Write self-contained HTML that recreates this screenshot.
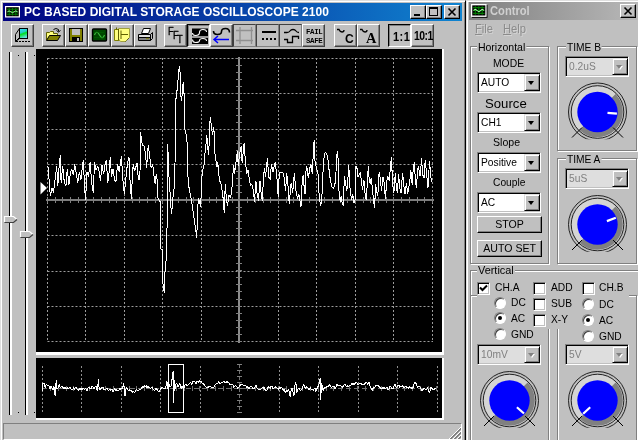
<!DOCTYPE html>
<html><head><meta charset="utf-8"><title>PC BASED DIGITAL STORAGE OSCILLOSCOPE 2100</title>
<style>
*{box-sizing:border-box;margin:0;padding:0}
html,body{width:638px;height:440px;overflow:hidden;background:#c0c0c0}
body{position:relative;font-family:"Liberation Sans",sans-serif;font-size:11.500px;color:#000}
.abs{position:absolute}
.t{position:absolute;white-space:nowrap;line-height:1;transform:scaleX(.93);transform-origin:0 0}
#mainwin{position:absolute;left:0;top:0;width:466px;height:442px;background:#c0c0c0;border-left:1px solid #dfdfdf;border-top:1px solid #dfdfdf;border-right:1px solid #000;box-shadow:inset 1px 1px 0 #fff,inset -1px 0 0 #808080}
#title1{position:absolute;left:3px;top:3px;width:459px;height:18px;background:linear-gradient(to right,#000080 0%,#1084d0 100%)}
#title1 .txt{transform:scaleX(.9995);transform-origin:0 0;position:absolute;left:21px;top:2px;font-weight:bold;font-size:12px;color:#fff;white-space:nowrap;letter-spacing:0.04px;line-height:14px}
.tbtn{position:absolute;top:2px;width:16px;height:14px;background:#c0c0c0;border:1px solid;border-color:#fff #000 #000 #fff;box-shadow:inset -1px -1px 0 #808080}
.btn{position:absolute;top:24px;width:23px;height:23px;background:#c0c0c0;border:1px solid;border-color:#fff #404040 #404040 #fff;box-shadow:inset -1px -1px 0 #808080}
.btn.down{border-color:#000 #fff #fff #000;box-shadow:inset 1px 1px 0 #808080}
.btn.flat{border-color:#404040 #808080 #808080 #404040;box-shadow:none}
.btn svg{position:absolute;left:-1px;top:-1px}
.sunk{border:1px solid;border-color:#808080 #fff #fff #808080}
#ctl{position:absolute;left:466px;top:0;width:180px;height:442px;background:#c0c0c0;border-left:1px solid #dfdfdf;border-top:1px solid #dfdfdf;box-shadow:inset 1px 1px 0 #fff}
#title2{position:absolute;left:469px;top:2px;width:170px;height:18px;background:linear-gradient(to right,#808080,#b8b8b8)}
.grp{position:absolute;border:1px solid #808080;box-shadow:1px 1px 0 #fff,inset 1px 1px 0 #fff}
.t.c{line-height:11px;transform:scaleX(.89)}
.lab{position:absolute;background:#c0c0c0;white-space:nowrap;line-height:11px;padding:0 1px;transform:scaleX(.89);transform-origin:0 0}
.combo{position:absolute;width:64px;height:21px;background:#fff;border:1px solid;border-color:#808080 #fff #fff #808080;box-shadow:inset 1px 1px 0 #000,inset -1px -1px 0 #c0c0c0}
.combo .tx{position:absolute;left:3px;top:4px;line-height:11px;white-space:nowrap;transform:scaleX(.89);transform-origin:0 0}
.combo.dis{background:#dedede}
.combo.dis .tx{color:#808080}
.combo .ar{position:absolute;right:0px;top:1px;width:16px;height:17px;background:#c0c0c0;border:1px solid;border-color:#dfdfdf #000 #000 #dfdfdf;box-shadow:inset 1px 1px 0 #fff,inset -1px -1px 0 #808080}
.combo .ar:after{content:"";position:absolute;left:3px;top:6px;border:3.5px solid transparent;border-top:4px solid #000;border-bottom:0}
.combo.dis .ar:after{border-top-color:#808080;filter:drop-shadow(1px 1px 0 #fff)}
.pbtn{position:absolute;width:65px;height:17px;background:#c0c0c0;border:1px solid;border-color:#fff #000 #000 #fff;box-shadow:inset -1px -1px 0 #808080;text-align:center;line-height:14px}
.pbtn span{display:inline-block;transform:scaleX(.92)}
.chk{position:absolute;width:13px;height:13px;background:#fff;border:1px solid;border-color:#808080 #fff #fff #808080;box-shadow:inset 1px 1px 0 #000,inset -1px -1px 0 #c0c0c0}
.rad{position:absolute;width:12px;height:12px;border-radius:50%;background:#fff;border:1px solid;border-color:#808080 #fff #fff #808080;box-shadow:inset 1px 1px 0 #404040}
.rad.on:after{content:"";position:absolute;left:3px;top:3px;width:4px;height:4px;border-radius:50%;background:#000}
.dot{stroke:#9c9c9c;stroke-width:1;stroke-dasharray:2 2}
.dot2{stroke:#909090;stroke-width:1;stroke-dasharray:2 2}
</style></head><body>

<div id="mainwin"></div>
<div id="title1">
 <svg class="abs" style="left:2px;top:3px" width="16" height="13" viewBox="0 0 16 13"><rect x="0.6" y="0.6" width="13.800" height="10.300" fill="#000" stroke="#fff" stroke-width="1.200"/><path d="M2 3.300H13M2 5.800H13M2 8.300H13M4.200 2V9.500M7.500 2V9.500M10.800 2V9.500" stroke="#007800" stroke-width="1.100" fill="none"/><path d="M2.500 5.800Q4 4 5.800 5.800T9.200 5.800T12.500 5.800" stroke="#b0ffb0" stroke-width="0.900" fill="none"/></svg>
 <div class="txt">PC BASED DIGITAL STORAGE OSCILLOSCOPE 2100</div>
 <div class="tbtn" style="left:407px"><div class="abs" style="left:3px;top:8px;width:6px;height:2px;background:#000"></div></div>
 <div class="tbtn" style="left:423px"><div class="abs" style="left:2px;top:1px;width:9px;height:9px;border:1px solid #000;border-top-width:2px"></div></div>
 <div class="tbtn" style="left:441px"><svg class="abs" style="left:2px;top:1px" width="10" height="10"><path d="M1.5 1.5L8.5 8.5M8.5 1.5L1.5 8.5" stroke="#000" stroke-width="1.6"/></svg></div>
</div>

<!-- toolbar -->
<div class="btn" style="left:11px"><svg width="23" height="23" viewBox="0 0 23 23"><path d="M4.5 10.5L8.5 4.5V13.5L4.5 17.5Z" fill="#c0c0c0" stroke="#000"/><defs><linearGradient id="g1" x1="0" y1="0" x2="0.3" y2="1"><stop offset="0" stop-color="#40e0ff"/><stop offset="0.45" stop-color="#20d0c0"/><stop offset="0.6" stop-color="#00e020"/><stop offset="1" stop-color="#60e0e0"/></linearGradient></defs><rect x="8.5" y="4.5" width="8" height="10" fill="url(#g1)" stroke="#000"/><path d="M4.5 17.5L8.5 14.5" stroke="#000"/><path d="M5 17.5H19" stroke="#000" stroke-dasharray="2 1"/></svg></div>
<div class="btn" style="left:42px"><svg width="23" height="23" viewBox="0 0 23 23"><path d="M4.5 16V8.5H7.5L8.5 7.5H11.5V9.5H15.5V11" fill="#ffff80" stroke="#606000" stroke-width="1"/><path d="M4.5 16.5L7.5 11.5H18.5L15.5 16.5Z" fill="#808000" stroke="#000" stroke-width="1"/><path d="M11.5 5.5Q14 3.5 16.5 5.5V7.5M14.5 6.5L16.5 8L18.5 6.5" fill="none" stroke="#000" stroke-width="1"/></svg></div>
<div class="btn" style="left:65px"><svg width="23" height="23" viewBox="0 0 23 23"><rect x="4.5" y="4.5" width="13" height="13" fill="#808000" stroke="#000"/><rect x="7" y="5" width="8" height="6" fill="#c0c0c0"/><rect x="7" y="13" width="8" height="4" fill="#000"/><rect x="12" y="14" width="2" height="3" fill="#c0c0c0"/></svg></div>
<div class="btn" style="left:88px"><svg width="23" height="23" viewBox="0 0 23 23"><rect x="4.5" y="5" width="14" height="12" rx="1" fill="#004800" stroke="#000" stroke-width="1.4"/><path d="M6.5 11Q8.5 5.5 11.5 11T16.5 11" fill="none" stroke="#40c040" stroke-width="1.1"/><path d="M6.5 8.5H16.500M6.500 13.500H16.500" stroke="#006800" stroke-width="1" stroke-dasharray="1 1"/></svg></div>
<div class="btn" style="left:111px"><svg width="23" height="23" viewBox="0 0 23 23"><g transform="translate(0,-1)"><path d="M3.5 6.5H10.5V17.5H3.5Z" fill="#ffff80" stroke="#808000"/><path d="M7.5 5.5H18.5V14.5L14.5 18.5H9.5L7.5 16Z" fill="#ffff80" stroke="#a0a040" stroke-width="1"/><path d="M5.500 4.500V6.500M7.5 6V17M10 7.500V16M10 11.500H17" stroke="#606000" stroke-width="1" fill="none"/><path d="M14.500 18.500L18.500 14.500" stroke="#404000" stroke-dasharray="1 1"/></g></svg></div>
<div class="btn" style="left:134px"><svg width="23" height="23" viewBox="0 0 23 23"><path d="M7.5 9.500L9.500 4.500H16.500L14.500 9.500Z" fill="#fff" stroke="#000"/><path d="M4.500 10.500H16.500L18.500 8.500V14.500L16.500 16.500H4.500Z" fill="#c0c0c0" stroke="#000"/><path d="M4.500 13.500H16.500M16.500 10.500V16.500" stroke="#000"/><path d="M5 12H16" stroke="#fff"/><path d="M12 14.500H15" stroke="#c0c000" stroke-width="1.2"/><path d="M5 15H16" stroke="#404040"/></svg></div>

<div class="btn" style="left:164px"><div class="t" style="left:2.800px;top:1.700px;font-size:10px;-webkit-text-stroke:0.3px #000">F</div><div class="t" style="left:7.500px;top:6px;font-size:10px;-webkit-text-stroke:0.3px #000">F</div><div class="t" style="left:12.200px;top:10px;font-size:10px;-webkit-text-stroke:0.3px #000">T</div></div>
<div class="btn down" style="left:187px"><svg width="23" height="23" viewBox="0 0 23 23"><rect x="5" y="4.500" width="16" height="15.500" fill="#000"/><path d="M5 13H21" stroke="#fff" stroke-width="1.2"/><path d="M5.500 9Q5.500 11.500 8.500 11.500Q12.500 11.500 12.500 8.500Q12.500 5.500 16 5.500Q19.500 5.500 19.500 8" fill="none" stroke="#fff" stroke-width="1.1"/><path d="M5.500 15.500Q5.500 18.500 8.500 18.500Q12.500 18.500 12.500 16.500Q12.500 14.500 16 14.500Q19.500 14.500 19.500 17" fill="none" stroke="#fff" stroke-width="1.1"/></svg></div>
<div class="btn" style="left:210px"><svg width="23" height="23" viewBox="0 0 23 23"><path d="M3.500 7Q3.500 10.500 7.500 10.500Q11.500 10.500 11.500 7.500Q11.500 4.500 15.500 4.500Q19.500 4.500 19.500 8.500" fill="none" stroke="#000" stroke-width="1.6"/><path d="M4 15.500H19M8 12L4 15.500L8 19" fill="none" stroke="#0000ff" stroke-width="1.5"/></svg></div>
<div class="btn flat" style="left:233px"><svg width="23" height="23" viewBox="0 0 23 23"><path d="M3 6.500H20M3 16.500H20M7 3V20M18.500 3V20" stroke="#909090" stroke-width="1.3" fill="none"/></svg></div>
<div class="btn flat" style="left:256px"><svg width="23" height="23" viewBox="0 0 23 23"><path d="M6 8H20" stroke="#000" stroke-width="2"/><path d="M6 15H20" stroke="#000" stroke-width="2" stroke-dasharray="2 2"/></svg></div>
<div class="btn flat" style="left:279px"><svg width="23" height="23" viewBox="0 0 23 23"><path d="M5 8.500H8Q10 8.500 11 7T14 5.500T17 7T20 8.500" fill="none" stroke="#000" stroke-width="1.3"/><path d="M5 15.500H8.500V18.500H13.500V12.500H19.500V15" fill="none" stroke="#000" stroke-width="1.3"/></svg></div>
<div class="btn" style="left:302px"><div class="t" style="left:2.500px;top:3px;font-family:'Liberation Mono',monospace;font-weight:bold;font-size:8px;letter-spacing:-0.4px">FAIL</div><div class="t" style="left:2.500px;top:11.500px;font-family:'Liberation Mono',monospace;font-weight:bold;font-size:8px;letter-spacing:-0.4px">SAFE</div></div>

<div class="btn" style="left:334px"><svg width="23" height="23" viewBox="0 0 23 23"><path d="M3 5.500H5Q6 8 8 8T10 6" fill="none" stroke="#000" stroke-width="1.3"/></svg><div class="t" style="left:10px;top:7px;font-weight:bold;font-size:13px">C</div></div>
<div class="btn" style="left:357px"><svg width="23" height="23" viewBox="0 0 23 23"><path d="M3 5.500H5Q6 8 8 8T10 6" fill="none" stroke="#000" stroke-width="1.3"/></svg><div class="t" style="left:8px;top:5px;font-family:'Liberation Serif',serif;font-weight:bold;font-size:15.500px">A</div></div>

<div class="btn down" style="left:388px"><div class="t" style="left:4px;top:4.500px;font-weight:bold;font-size:13px;letter-spacing:0.500px;transform:scaleX(.85)">1:1</div></div>
<div class="btn" style="left:411px"><div class="t" style="left:2px;top:4px;font-weight:bold;font-size:13px;letter-spacing:-0.6px;transform:scaleX(0.8);transform-origin:0 0">10:1</div></div>

<!-- sliders -->
<div class="abs" style="left:9px;top:52px;width:3px;height:363px;background:#fff;border-left:1px solid #000"></div>
<div class="abs" style="left:25px;top:52px;width:3px;height:363px;background:#fff;border-left:1px solid #000"></div>
<div class="abs" style="left:18px;top:55px;width:1px;height:1px;background:#000"></div>
<div class="abs" style="left:34px;top:55px;width:1px;height:1px;background:#000"></div>
<div class="abs" style="left:18px;top:412px;width:1px;height:1px;background:#000"></div>
<div class="abs" style="left:34px;top:412px;width:1px;height:1px;background:#000"></div>
<svg class="abs" style="left:0;top:0" width="40" height="440"><g><path d="M4.500 216.500H13.500L17 219.500L13.500 222.500H4.500Z" fill="#c0c0c0"/><path d="M4.500 222V216.500H13.500L17 219.500" fill="none" stroke="#fff" stroke-width="1.2"/><path d="M4.500 222.500H13.500L17 219.500" fill="none" stroke="#404040" stroke-width="1.2"/></g><g transform="translate(16,15)"><path d="M4.500 216.500H13.500L17 219.500L13.500 222.500H4.500Z" fill="#c0c0c0"/><path d="M4.500 222V216.500H13.500L17 219.500" fill="none" stroke="#fff" stroke-width="1.2"/><path d="M4.500 222.500H13.500L17 219.500" fill="none" stroke="#404040" stroke-width="1.2"/></g></svg>

<!-- scope -->
<div class="abs" style="left:36px;top:49px;width:408px;height:306px;background:#000;border-right:2px solid #fff;border-bottom:3px solid #fff"></div>
<div class="abs" style="left:36px;top:358px;width:408px;height:62px;background:#000;border-right:2px solid #fff;border-bottom:2px solid #fff"></div>
<svg class="abs" style="left:0;top:0" width="466" height="440" viewBox="0 0 466 440">
<line x1="47.5" y1="58" x2="47.5" y2="342" class="dot"/><line x1="85.5" y1="58" x2="85.5" y2="342" class="dot"/><line x1="124.5" y1="58" x2="124.5" y2="342" class="dot"/><line x1="162.5" y1="58" x2="162.5" y2="342" class="dot"/><line x1="201.5" y1="58" x2="201.5" y2="342" class="dot"/><line x1="278.5" y1="58" x2="278.5" y2="342" class="dot"/><line x1="316.5" y1="58" x2="316.5" y2="342" class="dot"/><line x1="355.5" y1="58" x2="355.5" y2="342" class="dot"/><line x1="393.5" y1="58" x2="393.5" y2="342" class="dot"/><line x1="432.5" y1="58" x2="432.5" y2="342" class="dot"/><line x1="47.5" y1="58.5" x2="433" y2="58.5" class="dot"/><line x1="47.5" y1="93.5" x2="433" y2="93.5" class="dot"/><line x1="47.5" y1="129.5" x2="433" y2="129.5" class="dot"/><line x1="47.5" y1="164.5" x2="433" y2="164.5" class="dot"/><line x1="47.5" y1="235.5" x2="433" y2="235.5" class="dot"/><line x1="47.5" y1="271.5" x2="433" y2="271.5" class="dot"/><line x1="47.5" y1="306.5" x2="433" y2="306.5" class="dot"/><line x1="47.5" y1="341.5" x2="433" y2="341.5" class="dot"/>
<line x1="46" y1="200" x2="434" y2="200" stroke="#7c7c7c" stroke-width="2"/><line x1="239" y1="57" x2="239" y2="343" stroke="#8c8c8c" stroke-width="2"/><line x1="47.5" y1="197" x2="47.5" y2="203" stroke="#808080" stroke-width="1"/><line x1="55.5" y1="197" x2="55.5" y2="203" stroke="#808080" stroke-width="1"/><line x1="62.5" y1="197" x2="62.5" y2="203" stroke="#808080" stroke-width="1"/><line x1="70.5" y1="197" x2="70.5" y2="203" stroke="#808080" stroke-width="1"/><line x1="78.5" y1="197" x2="78.5" y2="203" stroke="#808080" stroke-width="1"/><line x1="86.5" y1="197" x2="86.5" y2="203" stroke="#808080" stroke-width="1"/><line x1="93.5" y1="197" x2="93.5" y2="203" stroke="#808080" stroke-width="1"/><line x1="101.5" y1="197" x2="101.5" y2="203" stroke="#808080" stroke-width="1"/><line x1="109.5" y1="197" x2="109.5" y2="203" stroke="#808080" stroke-width="1"/><line x1="116.5" y1="197" x2="116.5" y2="203" stroke="#808080" stroke-width="1"/><line x1="124.5" y1="197" x2="124.5" y2="203" stroke="#808080" stroke-width="1"/><line x1="132.5" y1="197" x2="132.5" y2="203" stroke="#808080" stroke-width="1"/><line x1="139.5" y1="197" x2="139.5" y2="203" stroke="#808080" stroke-width="1"/><line x1="147.5" y1="197" x2="147.5" y2="203" stroke="#808080" stroke-width="1"/><line x1="155.5" y1="197" x2="155.5" y2="203" stroke="#808080" stroke-width="1"/><line x1="162.5" y1="197" x2="162.5" y2="203" stroke="#808080" stroke-width="1"/><line x1="170.5" y1="197" x2="170.5" y2="203" stroke="#808080" stroke-width="1"/><line x1="178.5" y1="197" x2="178.5" y2="203" stroke="#808080" stroke-width="1"/><line x1="186.5" y1="197" x2="186.5" y2="203" stroke="#808080" stroke-width="1"/><line x1="193.5" y1="197" x2="193.5" y2="203" stroke="#808080" stroke-width="1"/><line x1="201.5" y1="197" x2="201.5" y2="203" stroke="#808080" stroke-width="1"/><line x1="209.5" y1="197" x2="209.5" y2="203" stroke="#808080" stroke-width="1"/><line x1="216.5" y1="197" x2="216.5" y2="203" stroke="#808080" stroke-width="1"/><line x1="224.5" y1="197" x2="224.5" y2="203" stroke="#808080" stroke-width="1"/><line x1="232.5" y1="197" x2="232.5" y2="203" stroke="#808080" stroke-width="1"/><line x1="239.5" y1="197" x2="239.5" y2="203" stroke="#808080" stroke-width="1"/><line x1="247.5" y1="197" x2="247.5" y2="203" stroke="#808080" stroke-width="1"/><line x1="255.5" y1="197" x2="255.5" y2="203" stroke="#808080" stroke-width="1"/><line x1="263.5" y1="197" x2="263.5" y2="203" stroke="#808080" stroke-width="1"/><line x1="270.5" y1="197" x2="270.5" y2="203" stroke="#808080" stroke-width="1"/><line x1="278.5" y1="197" x2="278.5" y2="203" stroke="#808080" stroke-width="1"/><line x1="286.5" y1="197" x2="286.5" y2="203" stroke="#808080" stroke-width="1"/><line x1="293.5" y1="197" x2="293.5" y2="203" stroke="#808080" stroke-width="1"/><line x1="301.5" y1="197" x2="301.5" y2="203" stroke="#808080" stroke-width="1"/><line x1="309.5" y1="197" x2="309.5" y2="203" stroke="#808080" stroke-width="1"/><line x1="316.5" y1="197" x2="316.5" y2="203" stroke="#808080" stroke-width="1"/><line x1="324.5" y1="197" x2="324.5" y2="203" stroke="#808080" stroke-width="1"/><line x1="332.5" y1="197" x2="332.5" y2="203" stroke="#808080" stroke-width="1"/><line x1="340.5" y1="197" x2="340.5" y2="203" stroke="#808080" stroke-width="1"/><line x1="347.5" y1="197" x2="347.5" y2="203" stroke="#808080" stroke-width="1"/><line x1="355.5" y1="197" x2="355.5" y2="203" stroke="#808080" stroke-width="1"/><line x1="363.5" y1="197" x2="363.5" y2="203" stroke="#808080" stroke-width="1"/><line x1="370.5" y1="197" x2="370.5" y2="203" stroke="#808080" stroke-width="1"/><line x1="378.5" y1="197" x2="378.5" y2="203" stroke="#808080" stroke-width="1"/><line x1="386.5" y1="197" x2="386.5" y2="203" stroke="#808080" stroke-width="1"/><line x1="393.5" y1="197" x2="393.5" y2="203" stroke="#808080" stroke-width="1"/><line x1="401.5" y1="197" x2="401.5" y2="203" stroke="#808080" stroke-width="1"/><line x1="409.5" y1="197" x2="409.5" y2="203" stroke="#808080" stroke-width="1"/><line x1="417.5" y1="197" x2="417.5" y2="203" stroke="#808080" stroke-width="1"/><line x1="424.5" y1="197" x2="424.5" y2="203" stroke="#808080" stroke-width="1"/><line x1="432.5" y1="197" x2="432.5" y2="203" stroke="#808080" stroke-width="1"/><line x1="236" y1="58.5" x2="242" y2="58.5" stroke="#808080" stroke-width="1"/><line x1="236" y1="65.5" x2="242" y2="65.5" stroke="#808080" stroke-width="1"/><line x1="236" y1="72.5" x2="242" y2="72.5" stroke="#808080" stroke-width="1"/><line x1="236" y1="79.5" x2="242" y2="79.5" stroke="#808080" stroke-width="1"/><line x1="236" y1="86.5" x2="242" y2="86.5" stroke="#808080" stroke-width="1"/><line x1="236" y1="93.5" x2="242" y2="93.5" stroke="#808080" stroke-width="1"/><line x1="236" y1="100.5" x2="242" y2="100.5" stroke="#808080" stroke-width="1"/><line x1="236" y1="108.5" x2="242" y2="108.5" stroke="#808080" stroke-width="1"/><line x1="236" y1="115.5" x2="242" y2="115.5" stroke="#808080" stroke-width="1"/><line x1="236" y1="122.5" x2="242" y2="122.5" stroke="#808080" stroke-width="1"/><line x1="236" y1="129.5" x2="242" y2="129.5" stroke="#808080" stroke-width="1"/><line x1="236" y1="136.5" x2="242" y2="136.5" stroke="#808080" stroke-width="1"/><line x1="236" y1="143.5" x2="242" y2="143.5" stroke="#808080" stroke-width="1"/><line x1="236" y1="150.5" x2="242" y2="150.5" stroke="#808080" stroke-width="1"/><line x1="236" y1="157.5" x2="242" y2="157.5" stroke="#808080" stroke-width="1"/><line x1="236" y1="164.5" x2="242" y2="164.5" stroke="#808080" stroke-width="1"/><line x1="236" y1="171.5" x2="242" y2="171.5" stroke="#808080" stroke-width="1"/><line x1="236" y1="178.5" x2="242" y2="178.5" stroke="#808080" stroke-width="1"/><line x1="236" y1="185.5" x2="242" y2="185.5" stroke="#808080" stroke-width="1"/><line x1="236" y1="192.5" x2="242" y2="192.5" stroke="#808080" stroke-width="1"/><line x1="236" y1="199.5" x2="242" y2="199.5" stroke="#808080" stroke-width="1"/><line x1="236" y1="207.5" x2="242" y2="207.5" stroke="#808080" stroke-width="1"/><line x1="236" y1="214.5" x2="242" y2="214.5" stroke="#808080" stroke-width="1"/><line x1="236" y1="221.5" x2="242" y2="221.5" stroke="#808080" stroke-width="1"/><line x1="236" y1="228.5" x2="242" y2="228.5" stroke="#808080" stroke-width="1"/><line x1="236" y1="235.5" x2="242" y2="235.5" stroke="#808080" stroke-width="1"/><line x1="236" y1="242.5" x2="242" y2="242.5" stroke="#808080" stroke-width="1"/><line x1="236" y1="249.5" x2="242" y2="249.5" stroke="#808080" stroke-width="1"/><line x1="236" y1="256.5" x2="242" y2="256.5" stroke="#808080" stroke-width="1"/><line x1="236" y1="263.5" x2="242" y2="263.5" stroke="#808080" stroke-width="1"/><line x1="236" y1="270.5" x2="242" y2="270.5" stroke="#808080" stroke-width="1"/><line x1="236" y1="277.5" x2="242" y2="277.5" stroke="#808080" stroke-width="1"/><line x1="236" y1="284.5" x2="242" y2="284.5" stroke="#808080" stroke-width="1"/><line x1="236" y1="291.5" x2="242" y2="291.5" stroke="#808080" stroke-width="1"/><line x1="236" y1="299.5" x2="242" y2="299.5" stroke="#808080" stroke-width="1"/><line x1="236" y1="306.5" x2="242" y2="306.5" stroke="#808080" stroke-width="1"/><line x1="236" y1="313.5" x2="242" y2="313.5" stroke="#808080" stroke-width="1"/><line x1="236" y1="320.5" x2="242" y2="320.5" stroke="#808080" stroke-width="1"/><line x1="236" y1="327.5" x2="242" y2="327.5" stroke="#808080" stroke-width="1"/><line x1="236" y1="334.5" x2="242" y2="334.5" stroke="#808080" stroke-width="1"/><line x1="236" y1="341.5" x2="242" y2="341.5" stroke="#808080" stroke-width="1"/>
<path d="M40.500 182L47 188L40.500 194.500Z" fill="#fff"/>
<polyline points="47.9,166.2 48.7,174.2 50.3,196.4 51.9,187.7 53.5,192.5 55.1,179.7 56.7,166.2 57.8,186.1 59.1,167.0 60.3,155.1 61.1,182.9 62.7,166.2 64.2,181.3 65.9,186.1 67.3,168.6 68.9,185.3 70.5,171.8 71.8,169.4 73.4,175.0 74.7,163.8 76.2,173.4 77.8,182.9 79.4,171.8 81.0,179.7 82.6,163.8 83.4,159.9 84.5,186.1 85.6,200.4 86.9,171.8 88.5,176.6 90.1,162.3 91.7,182.9 93.3,192.5 94.5,162.3 96.0,170.2 97.6,166.2 99.1,171.0 100.4,181.3 102.0,165.4 103.6,174.2 105.2,163.8 106.5,159.9 107.6,182.9 108.7,176.6 110.3,156.7 111.5,176.6 113.1,168.6 114.4,179.7 116.0,181.3 117.6,163.8 119.2,171.8 120.3,163.8 121.4,155.9 122.7,178.2 124.3,194.1 125.9,178.2 127.4,163.8 129.0,157.5 130.3,186.1 131.4,198.8 132.4,175.6 133.2,164.5 134.5,170.9 135.6,167.7 137.2,162.9 137.9,174.1 139.2,180.4 140.0,170.9 140.7,131.9 141.4,140.7 142.7,145.4 144.3,146.2 145.6,155.0 146.7,167.7 147.5,153.4 148.3,145.4 149.4,153.4 150.7,166.1 151.9,167.7 152.7,164.5 153.8,174.1 155.1,183.6 156.2,174.1 157.0,178.8 157.8,186.8 157.8,197.7 160.2,201.7 160.7,248.7 162.3,249.5 162.3,283 163.4,284.5 164.2,293.3 164.2,272.6 165,271.8 165,261.5 166.6,260.7 166.9,236 167.4,200 167.4,143.8 168.2,154.2 168.6,172.5 169.7,183.6 170.5,204.1 171.7,213.6 172.6,200.9 174.5,185.0 175.0,165 175.3,130.3 175.6,101.1 176.6,94.7 177.7,83.6 178.5,74.1 179.3,66.1 180.2,74.1 180.9,96.3 181.7,101.1 182.5,88.4 183.3,82 183.7,93.2 184.5,93.2 184.5,120.0 184.8,129.5 186.9,136.7 187.6,172.5 189.1,188.4 190.4,194.5 192.0,204.1 196.8,237.5 197.6,210.4 198.4,197.7 200.7,206.5 201.5,185.0 202.3,170.9 203.9,166.1 204.7,156.6 206.0,143.8 206.8,135.1 207.9,148.6 208.7,155.0 209.5,131.1 209.4,130.7 210.3,117.2 211.5,127.5 212.6,134.6 213.8,126.7 215.0,153.7 216.2,162.5 217.0,167.2 217.8,162.5 219.4,180.0 221.0,183.8 222.6,193.4 223.4,201.3 224.2,212.5 225.3,183.8 226.2,196.6 227.4,206.1 229.0,195.0 230.5,198.2 231.7,191.8 232.9,174.3 233.7,164.8 234.5,173.6 236.1,160.9 237.4,151.3 238.2,165.6 239.3,156.1 241.2,145.8 242.1,162.5 244.1,143.4 245.6,164.1 246.9,173.6 248.0,170.4 249.6,180.0 250.4,186.2 251.7,183.8 252.8,188.6 253.6,191.0 254.4,202.1 256.0,181.5 256.8,191.8 258.4,200.5 260.0,180.7 260.7,190.2 262.3,200.5 263.4,179.1 264.4,167.9 265.5,176.8 267.4,158.5 268.7,176.8 270.3,179.9 271.4,164.0 273.0,172.0 275.1,162.5 276.6,173.6 277.4,183.8 278.2,197.4 279.3,172.7 282.9,172.6 284.0,176.6 285.6,190.9 286.7,172.6 287.9,184.5 289.2,203.6 290.3,192.5 291.1,182.9 292.7,192.5 294.3,173.4 295.9,190.9 297.5,198.8 298.8,194.1 299.9,200.4 301.0,206.8 301.9,186.1 303.1,175.0 304.2,187.7 305.1,194.1 306.2,166.2 307.3,168.6 308.3,178.2 309.9,167.8 311.0,164.6 312.3,174.2 313.4,151.1 314.2,140.0 315.0,160.7 316.6,168.6 318.2,174.2 319.0,192.5 320.5,206.0 321.7,202.0 322.9,173.4 324.2,155.9 325.3,151.9 327.7,155.9 328.5,165.4 330.1,178.2 331.7,186.9 333.3,188.5 334.8,186.1 336.0,171.8 337.2,151.1 338.5,162.3 339.1,195.6 340.4,202.0 341.2,195.6 342.3,203.6 343.3,206.0 344.4,175.8 345.5,182.9 346.8,190.9 347.6,184.5 348.7,164.6 350.0,187.7 351.5,200.4 352.8,194.1 353.9,202.8 355.0,200.4 356.0,166.2 357.1,168.6 357.9,177.4 359.5,173.4 360.3,172.6 361.3,179.7 362.4,190.1 364.0,180.5 365.1,194.1 366.4,200.4 367.5,178.2 368.3,166.2 369.2,179.7 370.3,183.7 371.1,178.2 372.4,187.7 373.5,200.4 374.6,208.4 375.6,184.5 376.7,190.9 377.8,196.4 379.1,172.6 380.3,178.2 381.5,190.9 383.1,176.6 384.2,182.9 385.4,198.8 386.7,181.3 387.8,176.6 389.4,180.5 390.5,165.4 391.5,156.7 392.3,178.2 393.1,188.5 393.9,192.5 395.3,172.6 396.2,186.1 397.4,193.3 398.6,174.2 399.7,187.7 401.0,193.3 402.6,172.6 403.7,184.5 405.0,194.1 406.4,182.9 407.7,194.1 409.0,186.1 410.1,178.2 410.9,170.2 412.1,184.5 413.3,168.6 414.4,162.3 415.3,179.7 416.4,187.7 417.6,170.2 418.5,166.2 419.6,175.0 420.4,175.8 421.5,158.3 422.8,175.0 424.1,178.2 425.2,159.9 426.5,173.4 428.0,187.7 429.5,160.7 430.7,176.6 431.9,182.1" fill="none" stroke="#fff" stroke-width="1" stroke-linejoin="bevel" shape-rendering="crispEdges"/>
<line x1="42.5" y1="366" x2="42.5" y2="413" class="dot2"/><line x1="81.5" y1="366" x2="81.5" y2="413" class="dot2"/><line x1="121.5" y1="366" x2="121.5" y2="413" class="dot2"/><line x1="160.5" y1="366" x2="160.5" y2="413" class="dot2"/><line x1="200.5" y1="366" x2="200.5" y2="413" class="dot2"/><line x1="279.5" y1="366" x2="279.5" y2="413" class="dot2"/><line x1="318.5" y1="366" x2="318.5" y2="413" class="dot2"/><line x1="358.5" y1="366" x2="358.5" y2="413" class="dot2"/><line x1="397.5" y1="366" x2="397.5" y2="413" class="dot2"/><line x1="437.5" y1="366" x2="437.5" y2="413" class="dot2"/><line x1="239.5" y1="364" x2="239.5" y2="413" stroke="#707070" stroke-width="1" stroke-dasharray="4 2"/><line x1="237" y1="364.5" x2="242" y2="364.5" stroke="#808080" stroke-width="1"/><line x1="237" y1="370.5" x2="242" y2="370.5" stroke="#808080" stroke-width="1"/><line x1="237" y1="376.5" x2="242" y2="376.5" stroke="#808080" stroke-width="1"/><line x1="237" y1="382.5" x2="242" y2="382.5" stroke="#808080" stroke-width="1"/><line x1="237" y1="388.5" x2="242" y2="388.5" stroke="#808080" stroke-width="1"/><line x1="237" y1="394.5" x2="242" y2="394.5" stroke="#808080" stroke-width="1"/><line x1="237" y1="400.5" x2="242" y2="400.5" stroke="#808080" stroke-width="1"/><line x1="237" y1="406.5" x2="242" y2="406.5" stroke="#808080" stroke-width="1"/><line x1="237" y1="412.5" x2="242" y2="412.5" stroke="#808080" stroke-width="1"/><line x1="42" y1="388.5" x2="437" y2="388.5" stroke="#707070" stroke-width="1" stroke-dasharray="5 3"/><line x1="42.5" y1="386" x2="42.5" y2="391" stroke="#707070" stroke-width="1"/><line x1="50.5" y1="386" x2="50.5" y2="391" stroke="#707070" stroke-width="1"/><line x1="58.5" y1="386" x2="58.5" y2="391" stroke="#707070" stroke-width="1"/><line x1="66.5" y1="386" x2="66.5" y2="391" stroke="#707070" stroke-width="1"/><line x1="73.5" y1="386" x2="73.5" y2="391" stroke="#707070" stroke-width="1"/><line x1="81.5" y1="386" x2="81.5" y2="391" stroke="#707070" stroke-width="1"/><line x1="89.5" y1="386" x2="89.5" y2="391" stroke="#707070" stroke-width="1"/><line x1="97.5" y1="386" x2="97.5" y2="391" stroke="#707070" stroke-width="1"/><line x1="105.5" y1="386" x2="105.5" y2="391" stroke="#707070" stroke-width="1"/><line x1="113.5" y1="386" x2="113.5" y2="391" stroke="#707070" stroke-width="1"/><line x1="121.5" y1="386" x2="121.5" y2="391" stroke="#707070" stroke-width="1"/><line x1="129.5" y1="386" x2="129.5" y2="391" stroke="#707070" stroke-width="1"/><line x1="136.5" y1="386" x2="136.5" y2="391" stroke="#707070" stroke-width="1"/><line x1="144.5" y1="386" x2="144.5" y2="391" stroke="#707070" stroke-width="1"/><line x1="152.5" y1="386" x2="152.5" y2="391" stroke="#707070" stroke-width="1"/><line x1="160.5" y1="386" x2="160.5" y2="391" stroke="#707070" stroke-width="1"/><line x1="168.5" y1="386" x2="168.5" y2="391" stroke="#707070" stroke-width="1"/><line x1="176.5" y1="386" x2="176.5" y2="391" stroke="#707070" stroke-width="1"/><line x1="184.5" y1="386" x2="184.5" y2="391" stroke="#707070" stroke-width="1"/><line x1="192.5" y1="386" x2="192.5" y2="391" stroke="#707070" stroke-width="1"/><line x1="199.5" y1="386" x2="199.5" y2="391" stroke="#707070" stroke-width="1"/><line x1="207.5" y1="386" x2="207.5" y2="391" stroke="#707070" stroke-width="1"/><line x1="215.5" y1="386" x2="215.5" y2="391" stroke="#707070" stroke-width="1"/><line x1="223.5" y1="386" x2="223.5" y2="391" stroke="#707070" stroke-width="1"/><line x1="231.5" y1="386" x2="231.5" y2="391" stroke="#707070" stroke-width="1"/><line x1="239.5" y1="386" x2="239.5" y2="391" stroke="#707070" stroke-width="1"/><line x1="247.5" y1="386" x2="247.5" y2="391" stroke="#707070" stroke-width="1"/><line x1="255.5" y1="386" x2="255.5" y2="391" stroke="#707070" stroke-width="1"/><line x1="263.5" y1="386" x2="263.5" y2="391" stroke="#707070" stroke-width="1"/><line x1="270.5" y1="386" x2="270.5" y2="391" stroke="#707070" stroke-width="1"/><line x1="278.5" y1="386" x2="278.5" y2="391" stroke="#707070" stroke-width="1"/><line x1="286.5" y1="386" x2="286.5" y2="391" stroke="#707070" stroke-width="1"/><line x1="294.5" y1="386" x2="294.5" y2="391" stroke="#707070" stroke-width="1"/><line x1="302.5" y1="386" x2="302.5" y2="391" stroke="#707070" stroke-width="1"/><line x1="310.5" y1="386" x2="310.5" y2="391" stroke="#707070" stroke-width="1"/><line x1="318.5" y1="386" x2="318.5" y2="391" stroke="#707070" stroke-width="1"/><line x1="326.5" y1="386" x2="326.5" y2="391" stroke="#707070" stroke-width="1"/><line x1="333.5" y1="386" x2="333.5" y2="391" stroke="#707070" stroke-width="1"/><line x1="341.5" y1="386" x2="341.5" y2="391" stroke="#707070" stroke-width="1"/><line x1="349.5" y1="386" x2="349.5" y2="391" stroke="#707070" stroke-width="1"/><line x1="357.5" y1="386" x2="357.5" y2="391" stroke="#707070" stroke-width="1"/><line x1="365.5" y1="386" x2="365.5" y2="391" stroke="#707070" stroke-width="1"/><line x1="373.5" y1="386" x2="373.5" y2="391" stroke="#707070" stroke-width="1"/><line x1="381.5" y1="386" x2="381.5" y2="391" stroke="#707070" stroke-width="1"/><line x1="389.5" y1="386" x2="389.5" y2="391" stroke="#707070" stroke-width="1"/><line x1="396.5" y1="386" x2="396.5" y2="391" stroke="#707070" stroke-width="1"/><line x1="404.5" y1="386" x2="404.5" y2="391" stroke="#707070" stroke-width="1"/><line x1="412.5" y1="386" x2="412.5" y2="391" stroke="#707070" stroke-width="1"/><line x1="420.5" y1="386" x2="420.5" y2="391" stroke="#707070" stroke-width="1"/><line x1="428.5" y1="386" x2="428.5" y2="391" stroke="#707070" stroke-width="1"/><line x1="436.5" y1="386" x2="436.5" y2="391" stroke="#707070" stroke-width="1"/>
<rect x="168.500" y="364.500" width="15" height="48" fill="none" stroke="#fff" stroke-width="1"/>
<polyline points="42.4,390.8 42.7,382.8 43.5,383.2 44.3,383.6 45.1,387.6 45.9,385.4 46.7,384.4 47.5,385.4 48.3,385.2 49.1,386.0 49.9,389.2 50.7,386.4 51.5,386.0 52.3,389.2 53.1,390.0 53.8,386.0 54.5,389.6 55.1,395.5 55.7,387.9 56.2,380.4 57.0,389.2 57.8,388.4 58.6,385.2 59.4,384.5 60.2,387.5 61.0,386.8 61.8,386.7 62.6,386.7 63.4,388.4 64.2,386.9 65.0,388.5 65.8,387.6 66.6,388.7 67.4,387.5 68.2,389.2 69.0,388.1 69.7,386.9 70.5,387.6 71.3,389.3 72.1,389.3 72.9,389.2 73.7,387.5 74.5,389.3 75.3,387.6 76.1,387.2 76.9,388.6 77.7,390.0 78.5,390.8 79.3,388.0 80.1,390.0 80.9,388.4 81.7,389.8 82.5,389.4 83.3,387.8 84.1,389.2 84.9,388.9 85.6,388.5 86.4,390.0 87.2,390.4 88.0,387.8 88.8,387.6 89.6,387.9 90.4,388.7 91.2,388.4 92.0,386.6 92.8,386.0 93.6,388.8 94.4,389.2 95.2,386.4 96.0,386.0 96.8,389.6 97.6,390.8 98.4,378.8 99.2,389.2 100.0,388.7 100.7,389.3 101.5,387.6 102.3,387.5 103.1,387.5 103.9,389.2 104.7,390.1 105.5,389.9 106.3,388.4 107.1,388.6 107.9,390.0 108.7,390.8 109.5,389.1 110.3,390.9 111.1,389.2 111.9,389.2 112.7,391.6 113.5,392.0 114.3,388.8 115.1,389.2 115.9,390.9 116.6,389.7 117.4,390.8 118.2,390.6 119.0,390.4 119.8,388.4 120.6,389.3 121.4,388.9 122.2,389.2 123.0,386.6 123.8,382.8 124.4,390.8 125.1,396.3 125.7,392.2 126.2,386.8 127.0,388.4 127.8,390.0 128.6,390.3 129.5,389.9 130.3,390.8 131.1,390.7 131.9,391.3 132.7,392.4 133.5,390.9 134.3,393.1 135.1,391.6 135.9,390.4 136.7,389.2 137.5,390.7 138.3,390.3 139.1,390.0 139.9,389.5 140.7,389.5 141.5,388.4 142.3,387.2 143.1,386.0 143.9,387.5 144.6,385.3 145.4,386.8 146.2,385.3 147.0,387.5 147.8,386.0 148.6,387.4 149.4,387.0 150.2,388.4 151.0,388.0 151.8,387.6 152.6,387.8 153.4,389.8 154.2,390.0 155.0,390.3 155.8,388.3 156.6,389.2 157.4,389.2 158.2,391.6 159.0,392.0 159.7,391.2 160.5,389.2 161.3,388.4 162.1,387.6 162.9,387.9 163.7,388.1 164.5,388.4 165.3,388.4 166.1,386.0 166.9,381.2 167.7,388.4 168.5,387.0 169.3,384.4 170.1,386.8 170.9,386.8 171.5,383.4 172.1,378.8 172.7,373.7 173.3,370.9 173.6,402.7 174.4,380.4 175.3,389.2 175.9,384.8 176.4,382.8 177.2,384.8 178.0,386.8 178.8,385.8 179.6,383.6 180.4,385.2 181.2,389.2 181.8,386.4 182.3,386.0 182.9,387.2 183.6,388.4 184.4,387.6 185.2,384.4 186.0,385.3 186.8,384.9 187.6,385.2 188.4,385.0 189.2,383.6 190.0,382.8 190.8,382.4 191.5,384.4 192.3,383.4 193.1,381.2 193.9,381.7 194.7,381.7 195.5,382.8 196.3,383.7 197.1,381.1 197.9,382.0 198.7,382.3 199.5,380.3 200.3,381.2 201.1,381.4 201.9,382.8 202.7,383.6 203.5,383.8 204.3,384.6 205.1,386.0 205.9,387.1 206.6,387.7 207.4,387.6 208.2,387.9 209.0,385.9 209.8,386.8 210.7,386.5 211.5,387.9 212.4,387.6 213.2,387.4 214.0,387.2 214.8,385.2 215.6,384.7 216.4,383.5 217.2,383.6 217.9,383.0 218.7,381.2 219.5,383.6 220.3,383.6 221.1,382.8 221.9,382.0 222.7,382.3 223.5,381.5 224.3,381.2 225.1,382.6 225.9,382.8 226.7,381.8 227.5,382.0 228.3,382.5 229.1,382.9 229.9,385.2 230.7,384.3 231.5,384.1 232.3,384.4 233.1,385.4 233.8,387.6 234.6,386.5 235.4,385.3 236.2,386.0 237.0,387.1 237.8,388.3 238.6,387.6 239.4,385.9 240.2,385.5 241.0,384.4 241.8,384.9 242.6,384.3 243.4,386.0 244.2,385.1 245.0,386.1 245.8,385.2 246.6,387.2 247.4,386.8 248.2,387.6 249.0,388.3 249.7,387.7 250.5,386.0 251.3,386.8 252.1,387.0 252.9,388.4 253.7,388.8 254.5,388.0 255.3,386.0 256.1,385.6 256.9,388.2 257.7,388.4 258.5,389.9 259.3,389.5 260.1,389.2 260.9,389.3 261.7,388.7 262.5,387.6 263.3,388.7 264.0,387.5 264.8,389.2 265.6,390.6 266.4,390.8 267.2,389.8 268.0,387.6 268.8,386.7 269.6,387.5 270.4,388.4 271.0,386.0 271.7,386.0 272.2,386.6 272.8,388.4 273.6,388.7 274.4,387.3 275.2,387.6 276.0,386.7 276.8,388.1 277.6,388.4 278.4,389.9 279.2,387.7 280.0,389.2 280.8,387.7 281.5,387.5 282.3,388.4 283.1,390.4 283.9,389.4 284.7,390.8 285.5,392.3 286.3,390.1 287.1,391.6 287.9,390.4 288.7,389.2 289.5,394.3 290.3,397.1 290.9,391.6 291.4,388.4 292.0,388.4 292.7,390.8 293.3,392.5 293.9,395.5 294.5,390.8 295.1,383.6 295.9,382.8 296.6,392.4 297.4,391.0 298.2,388.4 299.0,388.6 299.8,390.0 300.6,390.8 301.1,390.0 301.6,389.2 302.6,388.0 303.5,384.4 304.2,385.7 304.9,387.7 305.6,388.4 306.4,386.8 307.2,387.6 307.9,387.6 308.7,390.0 309.5,389.4 310.3,387.6 311.1,389.0 311.9,389.8 312.7,390.0 313.5,390.1 314.3,388.9 315.1,388.4 315.9,391.6 316.7,388.8 317.5,388.4 318.3,385.4 319.1,383.6 319.7,379.7 320.3,378.1 320.7,399.5 321.5,382.8 322.3,386.8 323.1,390.8 323.9,388.8 324.6,386.8 325.4,387.8 326.2,387.6 327.0,386.2 327.8,387.2 328.6,385.2 329.4,384.5 330.2,385.7 331.0,386.8 331.8,387.7 332.6,386.3 333.4,386.0 334.2,386.6 335.0,388.4 335.8,388.3 336.6,384.5 337.4,384.4 338.2,386.1 338.9,385.5 339.7,386.0 340.5,385.1 341.3,386.5 342.1,386.8 342.9,387.2 343.7,385.2 344.5,384.4 345.3,384.6 346.1,386.0 346.9,386.8 347.7,385.7 348.5,386.9 349.3,385.2 350.1,385.9 350.9,385.3 351.7,383.6 352.5,384.0 353.3,384.4 354.1,383.3 354.8,384.5 355.6,382.8 356.4,382.7 357.2,383.3 358.0,384.4 358.8,384.7 359.6,383.3 360.4,383.6 361.2,383.3 362.0,385.3 362.8,384.4 363.6,384.7 364.4,383.9 365.2,383.6 366.0,382.7 366.8,382.9 367.6,384.4 368.4,383.2 369.2,382.0 369.9,385.4 370.7,387.6 371.5,389.2 372.3,390.8 373.1,388.2 373.9,386.8 374.7,387.5 375.5,385.7 376.3,385.2 377.1,386.1 377.9,385.7 378.7,386.0 379.5,387.1 380.3,386.9 381.1,389.2 382.1,388.3 383.0,387.5 384.0,388.4 384.8,387.5 385.6,388.5 386.4,387.6 387.2,387.8 387.9,389.2 388.7,390.0 389.5,387.4 390.3,386.0 391.1,387.4 391.9,388.8 392.7,388.4 393.5,388.3 394.3,384.5 395.1,384.4 395.9,386.6 396.7,387.6 397.5,386.4 398.3,385.2 399.1,385.2 399.9,387.6 400.7,385.9 401.5,387.1 402.3,386.0 403.1,385.9 403.8,387.7 404.6,387.6 405.4,386.2 406.2,386.0 407.0,387.4 407.8,387.6 408.6,388.4 409.4,386.7 410.2,387.9 411.0,386.8 411.8,388.2 412.6,388.4 413.4,386.6 414.2,383.6 414.9,382.4 415.5,383.0 416.2,383.6 416.8,385.0 417.4,387.6 418.2,386.6 419.0,386.8 419.8,386.7 420.5,388.3 421.3,390.0 422.1,390.7 422.9,389.5 423.7,388.4 424.5,388.1 425.3,390.1 426.1,389.2 426.9,389.6 427.7,387.6 428.5,391.0 429.3,393.2 430.1,390.4 430.9,387.6 431.7,387.5 432.5,389.9 433.3,389.2 434.1,390.1 434.8,388.1 435.6,388.4" fill="none" stroke="#fff" stroke-width="1" stroke-linejoin="bevel" shape-rendering="crispEdges"/>
</svg>

<!-- status bar -->
<div class="abs" style="left:3px;top:423px;width:459px;height:17px;border:1px solid;border-color:#808080 #fff #fff #808080"></div>
<svg class="abs" style="left:448px;top:426px" width="14" height="14"><path d="M13 1L1 13M13 5L5 13M13 9L9 13" stroke="#fff" stroke-width="1"/><path d="M13 2L2 13M13 3L3 13M13 6L6 13M13 7L7 13M13 10L10 13M13 11L11 13" stroke="#808080" stroke-width="1"/></svg>

<!-- control window -->
<div id="ctl"></div>
<div id="title2">
 <svg class="abs" style="left:2px;top:2px" width="17" height="14" viewBox="0 0 17 14"><rect x="1" y="1" width="15.5" height="12.800" fill="#000"/><g transform="scale(1.04,1.12)"><rect x="0.6" y="0.6" width="13.800" height="10.300" fill="#000" stroke="#fff" stroke-width="1.200"/><path d="M2 3.300H13M2 5.800H13M2 8.300H13M4.200 2V9.500M7.500 2V9.500M10.800 2V9.500" stroke="#007800" stroke-width="1.100" fill="none"/><path d="M2.500 5.800Q4 4 5.800 5.800T9.200 5.800T12.500 5.800" stroke="#b0ffb0" stroke-width="0.900" fill="none"/></g></svg>
 <div class="t" style="left:21px;top:3px;font-weight:bold;font-size:12px;color:#d0d0d0">Control</div>
 <div class="tbtn" style="left:151px"><svg class="abs" style="left:2px;top:1px" width="10" height="10"><path d="M1.500 1.500L8.500 8.500M8.500 1.500L1.500 8.500" stroke="#000" stroke-width="1.600"/></svg></div>
</div>
<div class="t" style="left:475px;top:23.300px;font-size:12px;color:#8c8c8c;text-shadow:1px 1px 0 #d4d4d4"><u>F</u>ile</div>
<div class="t" style="left:503px;top:23.300px;font-size:12px;color:#8c8c8c;text-shadow:1px 1px 0 #d4d4d4"><u>H</u>elp</div>

<!-- Horizontal group -->
<div class="grp" style="left:470px;top:46px;width:79px;height:218px"></div>
<div class="lab" style="left:476.800px;top:41.600px;transform:scaleX(.915)">Horizontal</div>
<div class="t c" style="left:493px;top:57.500px;transform:scaleX(.90)">MODE</div>
<div class="combo" style="left:477px;top:72px"><div class="tx">AUTO</div><div class="ar"></div></div>
<div class="t" style="left:485px;top:97px;font-size:13.500px;transform:scaleX(.975)">Source</div>
<div class="combo" style="left:477px;top:112px"><div class="tx">CH1</div><div class="ar"></div></div>
<div class="t c" style="left:493px;top:137px;transform:scaleX(.92)">Slope</div>
<div class="combo" style="left:477px;top:152px"><div class="tx">Positive</div><div class="ar"></div></div>
<div class="t c" style="left:493px;top:177px">Couple</div>
<div class="combo" style="left:477px;top:192px"><div class="tx">AC</div><div class="ar"></div></div>
<div class="pbtn" style="left:477px;top:216px"><span>STOP</span></div>
<div class="pbtn" style="left:477px;top:240px"><span>AUTO SET</span></div>

<!-- TIME B / TIME A -->
<div class="grp" style="left:557px;top:46px;width:80px;height:105px"></div>
<div class="lab" style="left:566.300px;top:41.500px">TIME B</div>
<div class="combo dis" style="left:565px;top:56px"><div class="tx">0.2uS</div><div class="ar"></div></div>
<div class="grp" style="left:557px;top:158px;width:80px;height:106px"></div>
<div class="lab" style="left:566.300px;top:154.300px">TIME A</div>
<div class="combo dis" style="left:565px;top:168px"><div class="tx">5uS</div><div class="ar"></div></div>

<!-- Vertical -->
<div class="grp" style="left:470px;top:270px;width:180px;height:180px"></div>
<div class="grp" style="left:470px;top:295px;width:79px;height:160px"></div>
<div class="grp" style="left:557px;top:295px;width:80px;height:160px"></div>
<div class="lab" style="left:477px;top:265px;transform:scaleX(.95)">Vertical</div>
<div class="abs" style="left:477px;top:281px;width:152px;height:47.500px;background:#c0c0c0"></div>
<div class="abs" style="left:490px;top:294px;width:100px;height:47px;background:#c0c0c0;display:none"></div>

<div class="chk" style="left:477px;top:282px"><svg class="abs" style="left:1px;top:1px" width="9" height="9"><path d="M1 3.500L3.500 6L8 1.500" fill="none" stroke="#000" stroke-width="2"/></svg></div>
<div class="t c" style="left:495px;top:282px">CH.A</div>
<div class="chk" style="left:533px;top:282px"></div>
<div class="t c" style="left:551px;top:282px">ADD</div>
<div class="chk" style="left:582px;top:282px"></div>
<div class="t c" style="left:599px;top:282px">CH.B</div>

<div class="rad" style="left:494px;top:297px"></div><div class="t c" style="left:511px;top:297.2px">DC</div>
<div class="chk" style="left:533px;top:298px"></div><div class="t c" style="left:551px;top:298px">SUB</div>
<div class="rad" style="left:582px;top:298px"></div><div class="t c" style="left:599px;top:298.500px">DC</div>

<div class="rad on" style="left:494px;top:312px"></div><div class="t c" style="left:511px;top:312.700px">AC</div>
<div class="chk" style="left:533px;top:314px"></div><div class="t c" style="left:551px;top:314px">X-Y</div>
<div class="rad on" style="left:582px;top:314px"></div><div class="t c" style="left:599px;top:314.500px">AC</div>

<div class="rad" style="left:494px;top:328px"></div><div class="t c" style="left:511px;top:329.200px">GND</div>
<div class="rad" style="left:582px;top:330px"></div><div class="t c" style="left:599px;top:330.500px">GND</div>

<div class="combo dis" style="left:477px;top:344px"><div class="tx">10mV</div><div class="ar"></div></div>
<div class="combo dis" style="left:565px;top:344px"><div class="tx">5V</div><div class="ar"></div></div>

<svg class="abs" style="left:0;top:0" width="638" height="440" viewBox="0 0 638 440">
<clipPath id="k597_112"><rect x="557.5" y="72" width="80" height="67.3"/></clipPath><g clip-path="url(#k597_112)"><circle cx="597.5" cy="112" r="26" fill="#d4d4d4"/><path d="M615.6 93.9 A25.6 25.6 0 0 1 579.4 130.1 Z" fill="#808080"/><circle cx="597.5" cy="112" r="29" fill="none" stroke="#101010" stroke-width="0.9"/><circle cx="597.5" cy="112" r="26.3" fill="none" stroke="#101010" stroke-width="0.9"/><line x1="581.9" y1="127.6" x2="572.0" y2="137.5" stroke="#000" stroke-width="1"/><line x1="613.1" y1="127.6" x2="623.0" y2="137.5" stroke="#000" stroke-width="1"/><circle cx="597.5" cy="112" r="20.2" fill="#0000ff"/><line x1="607.5" y1="112.9" x2="616.9" y2="113.7" stroke="#fff" stroke-width="2.2"/></g><clipPath id="k597_224"><rect x="557.5" y="184.5" width="80" height="67.3"/></clipPath><g clip-path="url(#k597_224)"><circle cx="597.5" cy="224.5" r="26" fill="#d4d4d4"/><path d="M615.6 206.4 A25.6 25.6 0 0 1 579.4 242.6 Z" fill="#808080"/><circle cx="597.5" cy="224.5" r="29" fill="none" stroke="#101010" stroke-width="0.9"/><circle cx="597.5" cy="224.5" r="26.3" fill="none" stroke="#101010" stroke-width="0.9"/><line x1="581.9" y1="240.1" x2="572.0" y2="250.0" stroke="#000" stroke-width="1"/><line x1="613.1" y1="240.1" x2="623.0" y2="250.0" stroke="#000" stroke-width="1"/><circle cx="597.5" cy="224.5" r="20.2" fill="#0000ff"/><line x1="606.9" y1="221.1" x2="615.8" y2="217.8" stroke="#fff" stroke-width="2.2"/></g><clipPath id="k509_400"><rect x="469.5" y="360.5" width="80" height="67.3"/></clipPath><g clip-path="url(#k509_400)"><circle cx="509.5" cy="400.5" r="26" fill="#d4d4d4"/><path d="M527.6 382.4 A25.6 25.6 0 0 1 491.4 418.6 Z" fill="#808080"/><circle cx="509.5" cy="400.5" r="29" fill="none" stroke="#101010" stroke-width="0.9"/><circle cx="509.5" cy="400.5" r="26.3" fill="none" stroke="#101010" stroke-width="0.9"/><line x1="493.9" y1="416.1" x2="484.0" y2="426.0" stroke="#000" stroke-width="1"/><line x1="525.1" y1="416.1" x2="535.0" y2="426.0" stroke="#000" stroke-width="1"/><circle cx="509.5" cy="400.5" r="20.2" fill="#0000ff"/><line x1="516.9" y1="407.2" x2="524.0" y2="413.5" stroke="#fff" stroke-width="2.2"/></g><clipPath id="k597_400"><rect x="557.5" y="360.5" width="80" height="67.3"/></clipPath><g clip-path="url(#k597_400)"><circle cx="597.5" cy="400.5" r="26" fill="#d4d4d4"/><path d="M615.6 382.4 A25.6 25.6 0 0 1 579.4 418.6 Z" fill="#808080"/><circle cx="597.5" cy="400.5" r="29" fill="none" stroke="#101010" stroke-width="0.9"/><circle cx="597.5" cy="400.5" r="26.3" fill="none" stroke="#101010" stroke-width="0.9"/><line x1="581.9" y1="416.1" x2="572.0" y2="426.0" stroke="#000" stroke-width="1"/><line x1="613.1" y1="416.1" x2="623.0" y2="426.0" stroke="#000" stroke-width="1"/><circle cx="597.5" cy="400.5" r="20.2" fill="#0000ff"/><line x1="590.2" y1="407.3" x2="583.2" y2="413.8" stroke="#fff" stroke-width="2.2"/></g>
</svg>
</body></html>
